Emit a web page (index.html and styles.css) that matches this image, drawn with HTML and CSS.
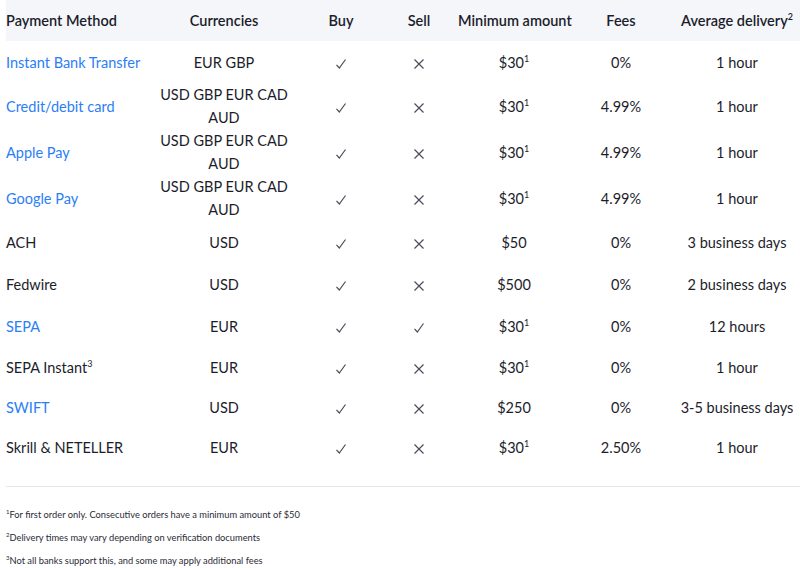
FILE: index.html
```html
<!DOCTYPE html>
<html>
<head>
<meta charset="utf-8">
<link rel="stylesheet" href="styles.css">
</head>
<body>
<div class="page">
<table class="pm">
<colgroup>
<col class="c1"><col class="c2"><col class="c3"><col class="c4"><col class="c5"><col class="c6"><col class="c7">
</colgroup>
<thead>
<tr><th class="left">Payment Method</th><th>Currencies</th><th>Buy</th><th>Sell</th><th>Minimum amount</th><th>Fees</th><th>Average delivery<sup>2</sup></th></tr>
</thead>
<tbody>
<tr><td class="left"><a>Instant Bank Transfer</a></td><td>EUR GBP</td><td><svg class="ok" viewBox="0 0 12 12"><path d="M1.5 6.8 L4.3 10 L10.5 1.5"/></svg></td><td><svg class="no" viewBox="0 0 12 12"><path d="M1.5 1.5 L10.5 10.5 M10.5 1.5 L1.5 10.5"/></svg></td><td>$30<sup>1</sup></td><td>0%</td><td>1 hour</td></tr>
<tr><td class="left"><a>Credit/debit card</a></td><td>USD GBP EUR CAD AUD</td><td><svg class="ok" viewBox="0 0 12 12"><path d="M1.5 6.8 L4.3 10 L10.5 1.5"/></svg></td><td><svg class="no" viewBox="0 0 12 12"><path d="M1.5 1.5 L10.5 10.5 M10.5 1.5 L1.5 10.5"/></svg></td><td>$30<sup>1</sup></td><td>4.99%</td><td>1 hour</td></tr>
<tr><td class="left"><a>Apple Pay</a></td><td>USD GBP EUR CAD AUD</td><td><svg class="ok" viewBox="0 0 12 12"><path d="M1.5 6.8 L4.3 10 L10.5 1.5"/></svg></td><td><svg class="no" viewBox="0 0 12 12"><path d="M1.5 1.5 L10.5 10.5 M10.5 1.5 L1.5 10.5"/></svg></td><td>$30<sup>1</sup></td><td>4.99%</td><td>1 hour</td></tr>
<tr><td class="left"><a>Google Pay</a></td><td>USD GBP EUR CAD AUD</td><td><svg class="ok" viewBox="0 0 12 12"><path d="M1.5 6.8 L4.3 10 L10.5 1.5"/></svg></td><td><svg class="no" viewBox="0 0 12 12"><path d="M1.5 1.5 L10.5 10.5 M10.5 1.5 L1.5 10.5"/></svg></td><td>$30<sup>1</sup></td><td>4.99%</td><td>1 hour</td></tr>
<tr><td class="left">ACH</td><td>USD</td><td><svg class="ok" viewBox="0 0 12 12"><path d="M1.5 6.8 L4.3 10 L10.5 1.5"/></svg></td><td><svg class="no" viewBox="0 0 12 12"><path d="M1.5 1.5 L10.5 10.5 M10.5 1.5 L1.5 10.5"/></svg></td><td>$50</td><td>0%</td><td>3 business days</td></tr>
<tr><td class="left">Fedwire</td><td>USD</td><td><svg class="ok" viewBox="0 0 12 12"><path d="M1.5 6.8 L4.3 10 L10.5 1.5"/></svg></td><td><svg class="no" viewBox="0 0 12 12"><path d="M1.5 1.5 L10.5 10.5 M10.5 1.5 L1.5 10.5"/></svg></td><td>$500</td><td>0%</td><td>2 business days</td></tr>
<tr><td class="left"><a>SEPA</a></td><td>EUR</td><td><svg class="ok" viewBox="0 0 12 12"><path d="M1.5 6.8 L4.3 10 L10.5 1.5"/></svg></td><td><svg class="ok" viewBox="0 0 12 12"><path d="M1.5 6.8 L4.3 10 L10.5 1.5"/></svg></td><td>$30<sup>1</sup></td><td>0%</td><td>12 hours</td></tr>
<tr class="tight"><td class="left">SEPA Instant<sup>3</sup></td><td>EUR</td><td><svg class="ok" viewBox="0 0 12 12"><path d="M1.5 6.8 L4.3 10 L10.5 1.5"/></svg></td><td><svg class="no" viewBox="0 0 12 12"><path d="M1.5 1.5 L10.5 10.5 M10.5 1.5 L1.5 10.5"/></svg></td><td>$30<sup>1</sup></td><td>0%</td><td>1 hour</td></tr>
<tr class="tight"><td class="left"><a>SWIFT</a></td><td>USD</td><td><svg class="ok" viewBox="0 0 12 12"><path d="M1.5 6.8 L4.3 10 L10.5 1.5"/></svg></td><td><svg class="no" viewBox="0 0 12 12"><path d="M1.5 1.5 L10.5 10.5 M10.5 1.5 L1.5 10.5"/></svg></td><td>$250</td><td>0%</td><td>3-5 business days</td></tr>
<tr class="tight"><td class="left">Skrill &amp; NETELLER</td><td>EUR</td><td><svg class="ok" viewBox="0 0 12 12"><path d="M1.5 6.8 L4.3 10 L10.5 1.5"/></svg></td><td><svg class="no" viewBox="0 0 12 12"><path d="M1.5 1.5 L10.5 10.5 M10.5 1.5 L1.5 10.5"/></svg></td><td>$30<sup>1</sup></td><td>2.50%</td><td>1 hour</td></tr>
</tbody>
</table>
<div class="notes">
<p><sup>1</sup>For first order only. Consecutive orders have a minimum amount of $50</p>
<p><sup>2</sup>Delivery times may vary depending on verification documents</p>
<p><sup>3</sup>Not all banks support this, and some may apply additional fees</p>
</div>
</div>
</body>
</html>
```
FILE: styles.css
```css
html, body {
  margin: 0;
  padding: 0;
  background: #fff;
  overflow: hidden;
}
body {
  font-family: Lato, "Liberation Sans", sans-serif;
  color: #1c1d2b;
  font-size: 14.5px;
}
.page {
  padding-left: 6px;
  width: 800px;
}
.pm {
  border-collapse: collapse;
  table-layout: fixed;
  width: 800px;
}
.c1 { width: 144px; }
.c2 { width: 148px; }
.c3 { width: 86px; }
.c4 { width: 70px; }
.c5 { width: 120px; }
.c6 { width: 94px; }
.c7 { width: 138px; }
.pm th {
  background: #f5f6fa;
  height: 41px;
  padding: 0 4px;
  font-weight: 600;
  font-size: 14.5px;
  text-align: center;
  white-space: nowrap;
  vertical-align: middle;
}
.pm td {
  height: 42px;
  padding: 0 4px;
  line-height: 23px;
  text-align: center;
  vertical-align: middle;
}
.pm tr.tight td {
  height: 40px;
}
.pm th.left, .pm td.left {
  text-align: left;
  padding-left: 0;
  white-space: nowrap;
}
.pm a {
  color: #2b7ef6;
}
sup {
  font-size: 9px;
  line-height: 0;
  vertical-align: 6px;
}
svg {
  width: 12px;
  height: 12px;
  vertical-align: middle;
}
svg path {
  fill: none;
  stroke: #4a4c58;
  stroke-width: 1.2;
}
.notes {
  border-top: 1px solid #e6e7ea;
  margin-top: 19px;
  padding-top: 21px;
  font-size: 9.3px;
  color: #2a2b36;
}
.notes p {
  margin: 0 0 10px 0;
  line-height: 13px;
}
.notes sup {
  font-size: 6px;
  vertical-align: 4px;
}
```
